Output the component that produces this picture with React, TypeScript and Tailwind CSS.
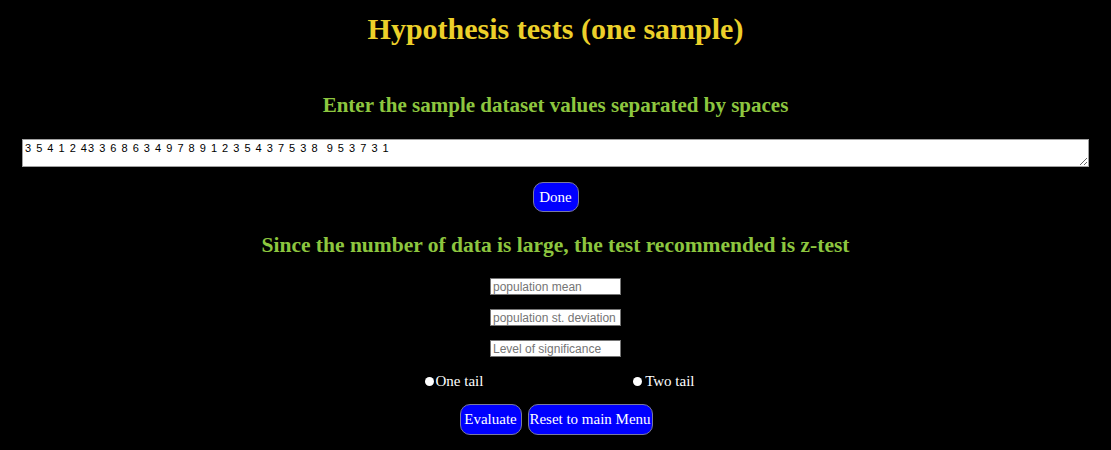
import { useState } from "react";

const serif = { fontFamily: '"Liberation Serif", "Times New Roman", serif' };

const btn =
  "bg-[#0000ff] text-white text-[15px] rounded-[10px] border border-[#7a7aa0] leading-none";

const NumberInput = ({ placeholder }: { placeholder: string }) => (
  <input
    type="text"
    placeholder={placeholder}
    className="w-[131px] h-[17px] bg-white text-black text-[12px] px-[2px] border border-[#767676] placeholder:text-[#757575] outline-none font-['Liberation_Sans',Arial,sans-serif]"
  />
);

export default function App() {
  const [data, setData] = useState(
    "3 5 4 1 2 43 3 6 8 6 3 4 9 7 8 9 1 2 3 5 4 3 7 5 3 8  9 5 3 7 3 1"
  );
  const [tail, setTail] = useState("");

  return (
    <main className="w-full min-h-[450px] bg-black" style={serif}>
      <h1 className="text-center font-bold text-[30px] text-[#ecd02a] pt-[12px] leading-[34px]">
        Hypothesis tests (one sample)
      </h1>

      <h2 className="text-center font-bold text-[21px] text-[#8dc63f] mt-[46px] leading-[26px]">
        Enter the sample dataset values separated by spaces
      </h2>

      <div className="px-[22px] mt-[21px]">
        <textarea
          value={data}
          onChange={(e) => setData(e.target.value)}
          className="block w-full h-[28px] bg-white text-black text-[11px] leading-[12px] px-[2px] py-[2px] border border-[#a0a0a0] outline-none resize-y tracking-[1px] font-['Liberation_Sans',Arial,sans-serif]"
        />
      </div>

      <div className="flex justify-center mt-[15px]">
        <button type="button" className={`${btn} w-[46px] h-[30px]`}>
          Done
        </button>
      </div>

      <h3 className="text-center font-bold text-[21.5px] text-[#8dc63f] mt-[20px] leading-[26px]">
        Since the number of data is large, the test recommended is z-test
      </h3>

      <div className="flex flex-col items-center gap-[14px] mt-[20px]">
        <NumberInput placeholder="population mean" />
        <NumberInput placeholder="population st. deviation" />
        <NumberInput placeholder="Level of significance" />
      </div>

      <div className="flex justify-center mt-[15px]">
        <div className="flex justify-between w-[270px] ml-[8px] text-white text-[15px] leading-[18px]">
          <label className="flex items-center gap-[2px]">
            <input
              type="radio"
              name="tail"
              checked={tail === "one"}
              onChange={() => setTail("one")}
              className="appearance-none w-[9px] h-[9px] rounded-full bg-white"
            />
            One tail
          </label>
          <label className="flex items-center gap-[3px]">
            <input
              type="radio"
              name="tail"
              checked={tail === "two"}
              onChange={() => setTail("two")}
              className="appearance-none w-[9px] h-[9px] rounded-full bg-white"
            />
            Two tail
          </label>
        </div>
      </div>

      <div className="flex justify-center gap-[6px] mt-[14px] pl-[1px]">
        <button type="button" className={`${btn} w-[62px] h-[31px]`}>
          Evaluate
        </button>
        <button type="button" className={`${btn} w-[125px] h-[31px]`}>
          Reset to main Menu
        </button>
      </div>
    </main>
  );
}
